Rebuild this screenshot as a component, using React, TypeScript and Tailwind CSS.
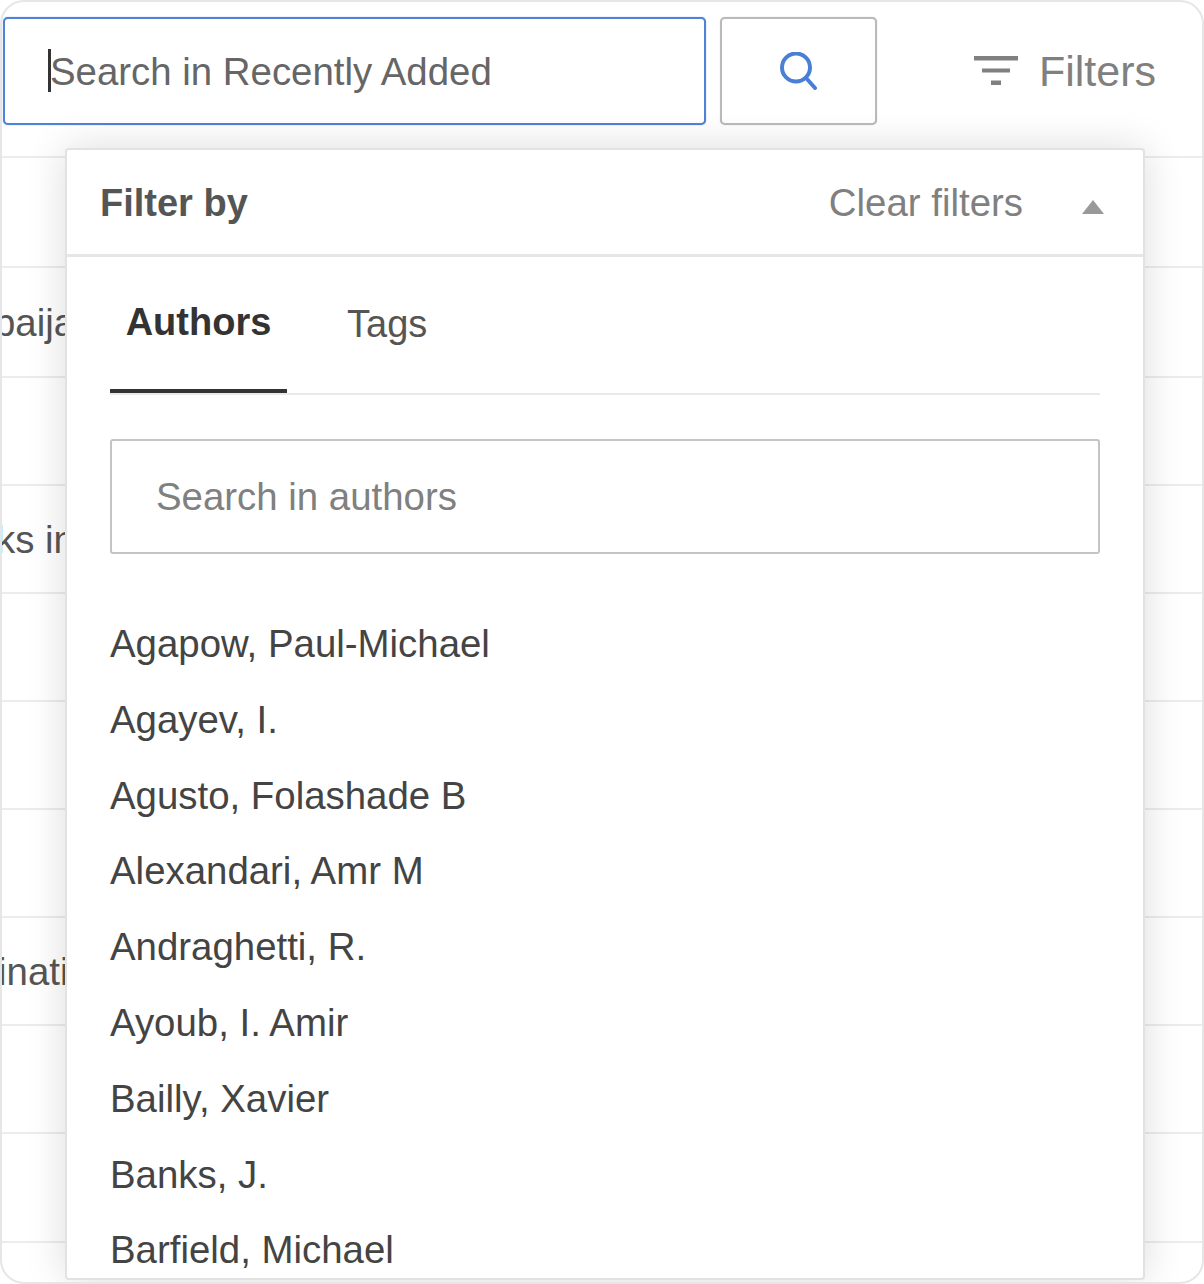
// Recently Added search bar with the filter popover open

const authors = [
  'Agapow, Paul-Michael',
  'Agayev, I.',
  'Agusto, Folashade B',
  'Alexandari, Amr M',
  'Andraghetti, R.',
  'Ayoub, I. Amir',
  'Bailly, Xavier',
  'Banks, J.',
  'Barfield, Michael',
];

// only the ends of the titles show left of the popover
const rows = [
  { height: 'h-[110px]', text: '', offset: '' },
  { height: 'h-[110px]', text: 'baijan', offset: '-ml-[8px]' },
  { height: 'h-[108px]', text: '', offset: '' },
  { height: 'h-[108px]', text: 'ks in', offset: '-ml-[6px]' },
  { height: 'h-[108px]', text: '', offset: '' },
  { height: 'h-[108px]', text: '', offset: '' },
  { height: 'h-[108px]', text: '', offset: '' },
  { height: 'h-[108px]', text: 'inating', offset: '-ml-[4px]' },
  { height: 'h-[108px]', text: '', offset: '' },
  { height: 'h-[109px]', text: '', offset: '' },
  { height: 'h-[40px]', text: '', offset: '' },
];

function SearchIcon() {
  return (
    <svg width="38" height="38" viewBox="0 0 38 38" fill="none" stroke="#4a7fd6" strokeWidth="4" strokeLinecap="round">
      <circle cx="16" cy="15.5" r="14" />
      <path d="M27 27 L35 36" />
    </svg>
  );
}

function FilterIcon() {
  return (
    <svg width="44" height="30" viewBox="0 0 44 30" fill="#808080">
      <rect x="0" y="0" width="44" height="4.5" />
      <rect x="8" y="12.5" width="28" height="4" />
      <rect x="17" y="24.5" width="10" height="4.5" />
    </svg>
  );
}

export default function App() {
  return (
    <div className="w-[1204px] h-[1284px] bg-white font-['Liberation_Sans',Arial,sans-serif]">
      <div className="relative w-full h-full overflow-hidden rounded-[24px] border-2 border-[#e6e6e6] bg-white">
        <div className="flex items-start pl-[1px] pt-[15px] h-[154px]">
          <div className="relative flex items-center w-[703px] h-[108px] bg-white rounded-[5px] border-2 border-[#4f83d8] shadow-[0_0_1px_#4f83d8] pl-[45px] pt-[2px]">
            <span className="absolute left-[43px] top-[30px] w-[3px] h-[43px] bg-[#333333]" />
            <span className="text-[38.4px] text-[#666666]">Search in Recently Added</span>
          </div>
          <button className="flex items-center justify-center ml-[14px] w-[157px] h-[108px] bg-white rounded-[5px] border-2 border-[#bababa] shadow-[0_0_1px_#bababa]">
            <SearchIcon />
          </button>
          <div className="flex items-center ml-[97px] h-[108px] gap-[21px] text-[43px] text-[#808080]">
            <FilterIcon />
            <span>Filters</span>
          </div>
        </div>

        <div className="text-[38.4px] text-[#555555]">
          {rows.map((row, i) => (
            <div key={i} className={`flex items-center border-t-2 border-[#ececec] ${row.height}`}>
              <div className="w-[63px] pt-[2px] overflow-hidden whitespace-nowrap">
                <span className={`block ${row.offset}`}>{row.text}</span>
              </div>
            </div>
          ))}
        </div>

        <div className="absolute left-[63px] top-[146px] w-[1080px] h-[1132px] overflow-hidden bg-white rounded-[4px] border-2 border-[#e2e2e2] shadow-[0_0_40px_rgba(0,0,0,0.14)]">
          <div className="flex items-center h-[107px] border-b-[3px] border-[#e6e6e6] pl-[33px] pr-[39px]">
            <span className="text-[38px] font-bold text-[#555555] pt-[2px]">Filter by</span>
            <span className="ml-auto text-[38.4px] text-[#808080] pt-[2px]">Clear filters</span>
            <span className="ml-[59px] mt-[10px] w-0 h-0 border-x-[11px] border-x-transparent border-b-[14px] border-b-[#999999]" />
          </div>

          <div className="px-[43px]">
            <div className="flex h-[138px] border-b-2 border-[#e9e9e9]">
              <div className="flex justify-center w-[177px] h-[136px] pt-[37px] border-b-[4px] border-[#333333] text-[38px] font-bold text-[#333333]">
                Authors
              </div>
              <div className="ml-[60px] pt-[39px] text-[38px] text-[#555555]">Tags</div>
            </div>

            <div className="flex items-center mt-[44px] h-[115px] pl-[44px] rounded-[3px] border-2 border-[#c4c4c4] text-[38.4px] text-[#808080]">
              Search in authors
            </div>

            <ul className="mt-[52px] text-[38.4px] text-[#444444]">
              {authors.map((name) => (
                <li key={name} className="flex items-center h-[75.8px]">{name}</li>
              ))}
            </ul>
          </div>
        </div>
      </div>
    </div>
  );
}
